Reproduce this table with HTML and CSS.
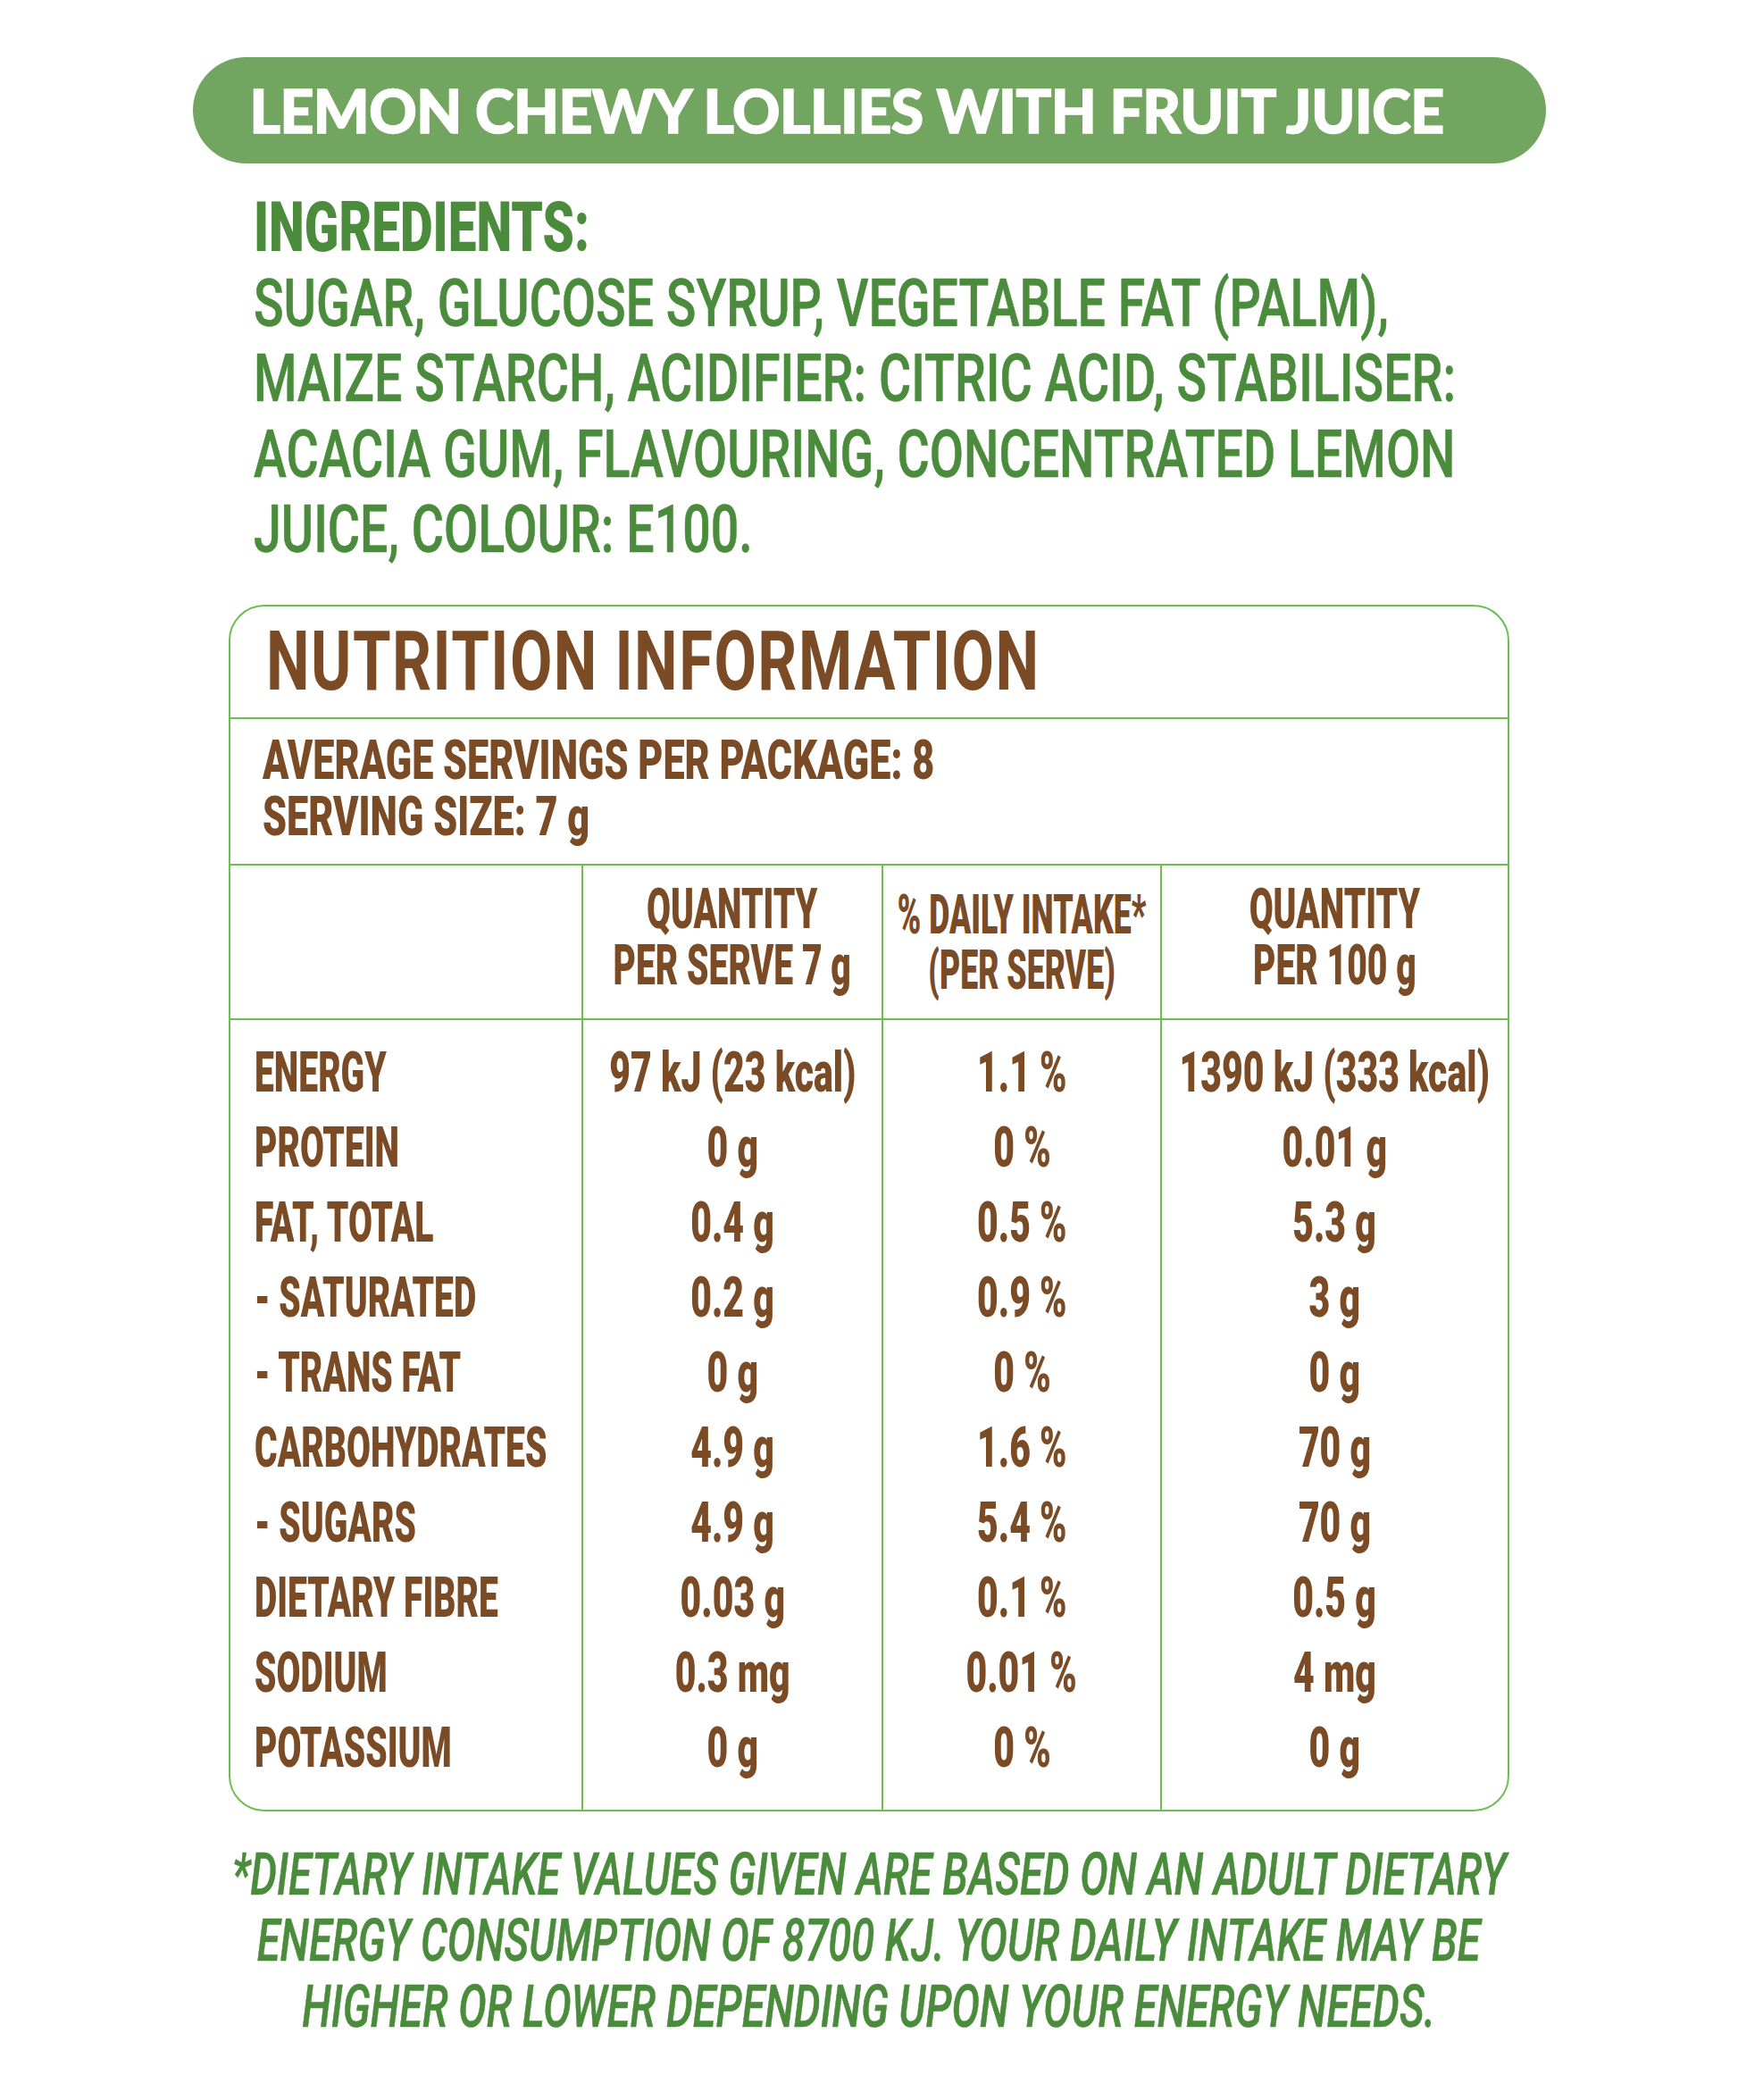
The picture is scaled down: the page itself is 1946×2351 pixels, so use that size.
FILE: index.html
```html
<!DOCTYPE html>
<html lang="en">
<head>
<meta charset="utf-8">
<title>Lemon Chewy Lollies with Fruit Juice</title>
<link rel="stylesheet" href="styles.css">
</head>
<body>
<main class="label">
  <header class="banner">
    <h1 class="banner-title">LEMON CHEWY LOLLIES WITH FRUIT JUICE</h1>
  </header>

  <section class="ingredients">
    <h2 class="ingredients-head squeeze">INGREDIENTS:</h2>
    <p class="ingredients-text squeeze">SUGAR, GLUCOSE SYRUP, VEGETABLE FAT (PALM),<br>MAIZE STARCH, ACIDIFIER: CITRIC ACID, STABILISER:<br>ACACIA GUM, FLAVOURING, CONCENTRATED LEMON<br>JUICE, COLOUR: E100.</p>
  </section>

  <section class="panel">
    <h2 class="panel-title"><span class="squeeze">NUTRITION INFORMATION</span></h2>
    <div class="panel-serving"><span class="squeeze">AVERAGE SERVINGS PER PACKAGE: 8<br>SERVING SIZE: 7 g</span></div>
    <table class="nip">
      <colgroup>
        <col class="col-label">
        <col class="col-serve">
        <col class="col-di">
        <col class="col-100">
      </colgroup>
      <thead>
        <tr>
          <th class="th-blank"></th>
          <th><div class="cell"><span class="squeeze">QUANTITY<br>PER SERVE 7 g</span></div></th>
          <th class="th-di"><div class="cell"><span class="squeeze">% DAILY INTAKE*<br>(PER SERVE)</span></div></th>
          <th><div class="cell"><span class="squeeze">QUANTITY<br>PER 100 g</span></div></th>
        </tr>
      </thead>
      <tbody>
        <tr><td><div class="cell cell-left"><span class="squeeze">ENERGY</span></div></td><td><div class="cell"><span class="squeeze">97 kJ (23 kcal)</span></div></td><td><div class="cell"><span class="squeeze">1.1 %</span></div></td><td><div class="cell"><span class="squeeze">1390 kJ (333 kcal)</span></div></td></tr>
        <tr><td><div class="cell cell-left"><span class="squeeze">PROTEIN</span></div></td><td><div class="cell"><span class="squeeze">0 g</span></div></td><td><div class="cell"><span class="squeeze">0 %</span></div></td><td><div class="cell"><span class="squeeze">0.01 g</span></div></td></tr>
        <tr><td><div class="cell cell-left"><span class="squeeze">FAT, TOTAL</span></div></td><td><div class="cell"><span class="squeeze">0.4 g</span></div></td><td><div class="cell"><span class="squeeze">0.5 %</span></div></td><td><div class="cell"><span class="squeeze">5.3 g</span></div></td></tr>
        <tr><td><div class="cell cell-left"><span class="squeeze">- SATURATED</span></div></td><td><div class="cell"><span class="squeeze">0.2 g</span></div></td><td><div class="cell"><span class="squeeze">0.9 %</span></div></td><td><div class="cell"><span class="squeeze">3 g</span></div></td></tr>
        <tr><td><div class="cell cell-left"><span class="squeeze">- TRANS FAT</span></div></td><td><div class="cell"><span class="squeeze">0 g</span></div></td><td><div class="cell"><span class="squeeze">0 %</span></div></td><td><div class="cell"><span class="squeeze">0 g</span></div></td></tr>
        <tr><td><div class="cell cell-left"><span class="squeeze">CARBOHYDRATES</span></div></td><td><div class="cell"><span class="squeeze">4.9 g</span></div></td><td><div class="cell"><span class="squeeze">1.6 %</span></div></td><td><div class="cell"><span class="squeeze">70 g</span></div></td></tr>
        <tr><td><div class="cell cell-left"><span class="squeeze">- SUGARS</span></div></td><td><div class="cell"><span class="squeeze">4.9 g</span></div></td><td><div class="cell"><span class="squeeze">5.4 %</span></div></td><td><div class="cell"><span class="squeeze">70 g</span></div></td></tr>
        <tr><td><div class="cell cell-left"><span class="squeeze">DIETARY FIBRE</span></div></td><td><div class="cell"><span class="squeeze">0.03 g</span></div></td><td><div class="cell"><span class="squeeze">0.1 %</span></div></td><td><div class="cell"><span class="squeeze">0.5 g</span></div></td></tr>
        <tr><td><div class="cell cell-left"><span class="squeeze">SODIUM</span></div></td><td><div class="cell"><span class="squeeze">0.3 mg</span></div></td><td><div class="cell"><span class="squeeze">0.01 %</span></div></td><td><div class="cell"><span class="squeeze">4 mg</span></div></td></tr>
        <tr><td><div class="cell cell-left"><span class="squeeze">POTASSIUM</span></div></td><td><div class="cell"><span class="squeeze">0 g</span></div></td><td><div class="cell"><span class="squeeze">0 %</span></div></td><td><div class="cell"><span class="squeeze">0 g</span></div></td></tr>
      </tbody>
    </table>
  </section>

  <p class="footnote">
    <span class="squeeze">*DIETARY INTAKE VALUES GIVEN ARE BASED ON AN ADULT DIETARY</span>
    <span class="squeeze">ENERGY CONSUMPTION OF 8700 KJ. YOUR DAILY INTAKE MAY BE</span>
    <span class="squeeze">HIGHER OR LOWER DEPENDING UPON YOUR ENERGY NEEDS.</span>
  </p>
</main>
</body>
</html>
```

FILE: styles.css
```css
html, body {
  margin: 0;
  padding: 0;
  background: #ffffff;
}

body {
  font-family: Roboto, "Liberation Sans", sans-serif;
  overflow-x: hidden;
}

.squeeze {
  display: block;
  white-space: nowrap;
  transform: scaleX(var(--sx, 0.7));
  transform-origin: left center;
}

.label {
  width: 1515px;
  margin: 0 auto;
  padding-top: 64px;
}

/* Banner */
.banner {
  height: 119px;
  border-radius: 60px;
  background: #72a55f;
  display: flex;
  align-items: center;
  padding-left: 64px;
}

.banner-title {
  margin: 0;
  font-family: Lato, "Open Sans", sans-serif;
  font-weight: 900;
  font-size: 66px;
  line-height: 1;
  letter-spacing: -0.5px;
  color: #ffffff;
  -webkit-text-stroke: 1.5px #ffffff;
  white-space: nowrap;
}

/* Ingredients */
.ingredients {
  margin-top: 30px;
  padding-left: 68px;
  color: #4a8c3c;
  line-height: 84.5px;
}

.ingredients-head {
  margin: 0;
  font-size: 77px;
  font-weight: 900;
  --sx: 0.735;
}

.ingredients-text {
  margin: 0;
  font-size: 74.5px;
  font-weight: 500;
  -webkit-text-stroke: 0.6px #4a8c3c;
  --sx: 0.745;
}

/* Nutrition panel */
.panel {
  width: 1434px;
  box-sizing: border-box;
  margin: 41.5px auto 0;
  border: 2px solid #6cbf4f;
  border-radius: 40px;
  overflow: hidden;
  color: #7a4b25;
}

.panel-title {
  margin: 0;
  height: 124px;
  line-height: 124px;
  padding-left: 40px;
  font-size: 93px;
  font-weight: 700;
  letter-spacing: 2px;
  border-bottom: 2px solid #6cbf4f;
  --sx: 0.74;
}

.panel-serving {
  padding: 15px 0 21px 36px;
  line-height: 63px;
  font-size: 60.5px;
  font-weight: 900;
  border-bottom: 2px solid #6cbf4f;
  --sx: 0.714;
}

.nip {
  width: 100%;
  border-collapse: separate;
  border-spacing: 0;
  table-layout: fixed;
}

.col-label { width: 393px; }
.col-serve { width: 336px; }
.col-di { width: 312px; }
.col-100 { width: 389px; }

.nip th,
.nip td {
  padding: 0;
  vertical-align: top;
}

.nip th + th,
.nip td + td {
  border-left: 2px solid #6cbf4f;
}

.nip thead th {
  padding: 17px 0 28px;
  line-height: 63px;
  font-size: 63px;
  font-weight: 900;
  text-align: center;
  border-bottom: 2px solid #6cbf4f;
  --sx: 0.62;
}

.nip thead .th-di {
  padding: 25px 0 20px;
  line-height: 62px;
  font-size: 60.5px;
  --sx: 0.59;
}

.nip tbody td {
  line-height: 84px;
  font-size: 63px;
  font-weight: 900;
  --sx: 0.65;
}

.nip tbody tr:first-child td {
  padding-top: 16.5px;
}

.nip tbody tr:last-child td {
  padding-bottom: 27.5px;
}

.cell {
  display: flex;
  justify-content: center;
}

.cell .squeeze {
  text-align: center;
  transform-origin: center center;
}

.cell-left {
  justify-content: flex-start;
  padding-left: 27px;
  --sx: 0.62;
}

.cell-left .squeeze {
  text-align: left;
  transform-origin: left center;
}

/* Footnote */
.footnote {
  margin: 33.5px 0 0;
  display: flex;
  flex-direction: column;
  align-items: center;
  font-size: 66px;
  font-style: italic;
  font-weight: 500;
  line-height: 74px;
  color: #4a8c3c;
  -webkit-text-stroke: 0.6px #4a8c3c;
  --sx: 0.713;
}

.footnote .squeeze {
  transform-origin: center center;
}
```
